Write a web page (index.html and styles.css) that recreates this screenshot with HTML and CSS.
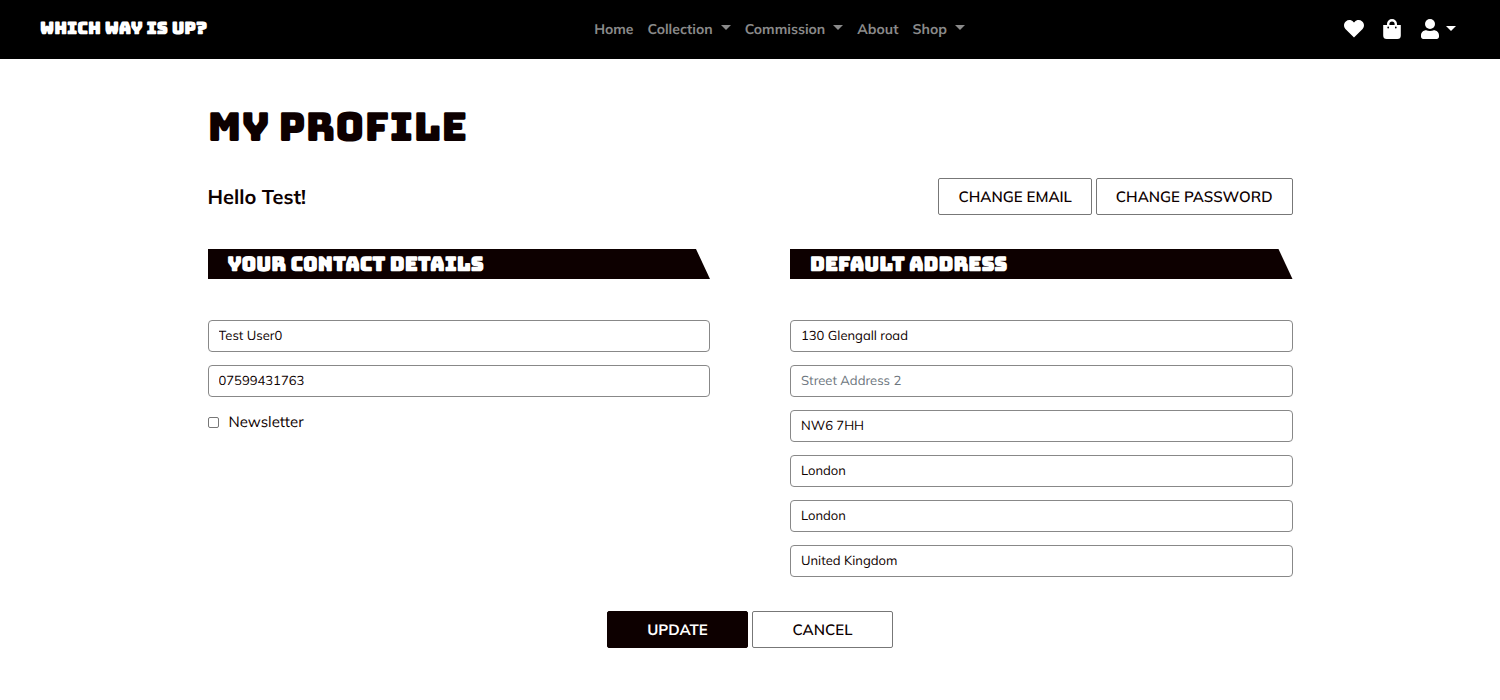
FILE: index.html
```html
<!DOCTYPE html>
<html lang="en">
<head>
<meta charset="utf-8">
<meta name="viewport" content="width=device-width, initial-scale=1">
<title>My Profile - Which Way Is Up?</title>
<link rel="stylesheet" href="styles.css">
</head>
<body>
<header class="navbar">
  <a class="brand" href="#">WHICH WAY IS UP?</a>
  <nav class="menu" aria-label="Main">
    <a href="#">Home</a>
    <a class="dropdown" href="#">Collection</a>
    <a class="dropdown" href="#">Commission</a>
    <a href="#">About</a>
    <a class="dropdown" href="#">Shop</a>
  </nav>
  <div class="tools">
    <a href="#" aria-label="Wishlist">
      <svg class="icon" viewBox="0 0 20 20"><path d="M10 18.6 1.4 9.9C-.6 7.8-.4 4.300 1.800 2.400 4.200.4 7.500.8 9.400 2.900L10 3.500l.6-.6C12.500.8 15.800.4 18.200 2.400c2.200 1.900 2.400 5.400.4 7.500z"/></svg>
    </a>
    <a href="#" aria-label="Bag">
      <svg class="icon" viewBox="0 0 20 20"><path fill-rule="evenodd" d="M5 6V5a5 5 0 0 1 10 0v1h3.800v10.500a3.500 3.500 0 0 1-3.500 3.500H4.700a3.500 3.500 0 0 1-3.500-3.500V6zm2.400 0h5.200V5a2.600 2.600 0 0 0-5.200 0zM6.200 7.600a.9.9 0 1 0 0 1.800.9.9 0 0 0 0-1.800zm7.600 0a.9.9 0 1 0 0 1.800.9.9 0 0 0 0-1.800z"/></svg>
    </a>
    <a class="dropdown" href="#" aria-label="Account">
      <svg class="icon" viewBox="0 0 20 20"><circle cx="10" cy="5" r="5"/><path d="M6.200 11.200c1 .5 2.300.8 3.800.8s2.800-.3 3.800-.8c3 0 5.200 2.200 5.200 5v1.600c0 1.200-1 2.200-2.200 2.200H3.200C2 20 1 19 1 17.800v-1.600c0-2.800 2.200-5 5.200-5z"/></svg>
    </a>
  </div>
</header>
<main class="page">
  <h1 class="title">MY PROFILE</h1>
  <div class="intro">
    <p class="greeting">Hello Test!</p>
    <div class="actions">
      <button class="btn" type="button">CHANGE EMAIL</button>
      <button class="btn" type="button">CHANGE PASSWORD</button>
    </div>
  </div>
  <form>
    <div class="columns">
      <section class="group">
        <h2 class="banner">YOUR CONTACT DETAILS</h2>
        <input class="field" type="text" aria-label="Full name" value="Test User0">
        <input class="field" type="tel" aria-label="Phone number" value="07599431763">
        <div class="check">
          <input class="box" type="checkbox" id="newsletter">
          <label for="newsletter">Newsletter</label>
        </div>
      </section>
      <section class="group">
        <h2 class="banner">DEFAULT ADDRESS</h2>
        <input class="field" type="text" aria-label="Street Address 1" value="130 Glengall road">
        <input class="field" type="text" aria-label="Street Address 2" placeholder="Street Address 2">
        <input class="field" type="text" aria-label="Postcode" value="NW6 7HH">
        <input class="field" type="text" aria-label="Town or city" value="London">
        <input class="field" type="text" aria-label="County" value="London">
        <input class="field" type="text" aria-label="Country" value="United Kingdom">
      </section>
    </div>
    <div class="submit">
      <button class="btn wide dark" type="submit">UPDATE</button>
      <button class="btn wide" type="button">CANCEL</button>
    </div>
  </form>
</main>
</body>
</html>
```
FILE: styles.css
```css
* {
  box-sizing: border-box;
}

body {
  margin: 0;
  background: #fff;
  color: #0d0000;
  font-family: Muli, Mulish, "Open Sans", sans-serif;
  font-size: 15px;
  line-height: 20px;
  text-rendering: geometricPrecision;
}

.navbar {
  display: flex;
  justify-content: space-between;
  align-items: center;
  height: 59px;
  padding: 0 44px 2px 40px;
  background: #000;
}

.navbar a {
  text-decoration: none;
}

.brand,
.title,
.banner {
  font-family: Bungee, Inter, sans-serif;
  font-weight: 700;
}

.brand {
  color: #fff;
  font-size: 17px;
}

.menu {
  display: flex;
  gap: 14px;
  padding-left: 8px;
}

.menu a {
  color: #8a8a8a;
  font-size: 14px;
  font-weight: 700;
}

.dropdown::after {
  content: "";
  display: inline-block;
  margin-left: 8px;
  vertical-align: 4px;
  border: 5px solid transparent;
  border-top-color: currentColor;
  border-bottom: 0;
}

.tools {
  display: flex;
  justify-content: flex-end;
  gap: 18px;
}

.tools a {
  display: flex;
  align-items: center;
  color: #fff;
}

.icon {
  width: 20px;
  height: 20px;
  fill: currentColor;
}

.tools .dropdown::after {
  margin-left: 6px;
}

.page {
  width: 75%;
  margin: 0 auto;
  padding: 43px 20px;
}

.title {
  margin: 0;
  font-size: 40px;
  font-weight: 400;
  line-height: 50px;
}

.intro {
  display: flex;
  align-items: center;
  justify-content: space-between;
  margin: 26px 0 34px;
}

.greeting {
  margin: 0;
  font-size: 20px;
  font-weight: 700;
}

.actions,
.submit {
  display: flex;
  gap: 4px;
}

.btn {
  height: 37px;
  padding: 0 19px;
  border: 1px solid #777;
  border-radius: 2px;
  background: #fff;
  color: #0d0000;
  font: inherit;
  font-weight: 600;
  text-rendering: inherit;
}

.wide {
  width: 141px;
}

.dark {
  border-color: #0d0000;
  background: #0d0000;
  color: #fff;
  font-weight: 700;
}

.columns {
  display: grid;
  grid-template-columns: 1fr 1fr;
  gap: 80px;
}

.group {
  display: flex;
  flex-direction: column;
  gap: 13px;
}

.banner {
  margin: 0 0 28px;
  padding: 0 20px;
  background: #0d0000;
  clip-path: polygon(0 0, calc(100% - 14px) 0, 100% 100%, 0 100%);
  color: #fff;
  font-size: 20px;
  line-height: 30px;
}

.field {
  width: 100%;
  height: 32px;
  padding: 0 10px;
  border: 1px solid #888;
  border-radius: 4px;
  background: #fff;
  color: #0d0000;
  font: inherit;
  font-size: 13px;
  text-rendering: inherit;
}

.field::placeholder {
  color: #6c757d;
  opacity: 1;
}

.check {
  display: flex;
  align-items: center;
  gap: 10px;
  margin-top: 2px;
}

.box {
  appearance: none;
  width: 11px;
  height: 11px;
  margin: 0;
  border: 1px solid #777;
  border-radius: 2px;
}

.box:checked {
  background: #0d0000;
}

.submit {
  justify-content: center;
  margin-top: 34px;
}
```
